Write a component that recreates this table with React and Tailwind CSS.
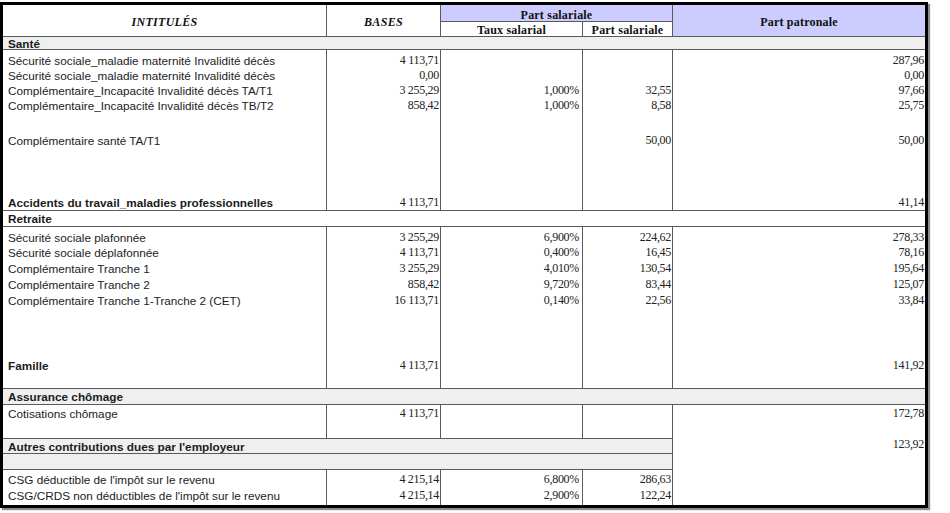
import React from "react";

const sans = "font-['Liberation_Sans',Arial,sans-serif]";
const serif = "font-['Liberation_Serif','Times_New_Roman',serif]";
const line = "border-[#5a5a5a]";

const santeRows = [
  { h: "h-[18px]", label: "Sécurité sociale_maladie maternité Invalidité décès", base: "4 113,71", pat: "287,96" },
  { h: "h-[15px]", label: "Sécurité sociale_maladie maternité Invalidité décès", base: "0,00", pat: "0,00" },
  { h: "h-[15px]", label: "Complémentaire_Incapacité Invalidité décès TA/T1", base: "3 255,29", taux: "1,000%", sal: "32,55", pat: "97,66" },
  { h: "h-[15px]", label: "Complémentaire_Incapacité Invalidité décès TB/T2", base: "858,42", taux: "1,000%", sal: "8,58", pat: "25,75" },
  { h: "h-[35px]", label: "Complémentaire santé TA/T1", sal: "50,00", pat: "50,00" },
  { h: "h-[63px]", label: "Accidents du travail_maladies professionnelles", bold: true, base: "4 113,71", pat: "41,14", last: true },
];

const retraiteRows = [
  { h: "h-[18px]", label: "Sécurité sociale plafonnée", base: "3 255,29", taux: "6,900%", sal: "224,62", pat: "278,33" },
  { h: "h-[15px]", label: "Sécurité sociale déplafonnée", base: "4 113,71", taux: "0,400%", sal: "16,45", pat: "78,16" },
  { h: "h-[16px]", label: "Complémentaire Tranche 1", base: "3 255,29", taux: "4,010%", sal: "130,54", pat: "195,64" },
  { h: "h-[16px]", label: "Complémentaire Tranche 2", base: "858,42", taux: "9,720%", sal: "83,44", pat: "125,07" },
  { h: "h-[16px]", label: "Complémentaire Tranche 1-Tranche 2 (CET)", base: "16 113,71", taux: "0,140%", sal: "22,56", pat: "33,84" },
  { h: "h-[65px]", label: "Famille", bold: true, base: "4 113,71", pat: "141,92" },
  { h: "h-[16px]", label: "", last: true },
];

const Num = ({ children, className = "" }) => (
  <span className={`${serif} text-[12px] leading-[15px] tracking-[-0.3px] text-[#222] ${className}`}>{children}</span>
);

const Head = ({ children, italic = false }) => (
  <span
    className={`${serif} text-[12px] leading-[12px] font-bold text-[#111] ${italic ? "italic tracking-[0.3px]" : "tracking-[0.2px]"}`}
  >
    {children}
  </span>
);

const Row = ({ row, patronale = true }) => (
  <div className={`flex ${row.h} ${row.last ? `border-b ${line}` : ""}`}>
    <div className={`w-[324px] border-r ${line} flex items-end pl-[5px]`}>
      <span
        className={`${sans} text-[11.75px] leading-[15px] text-[#1c1c1c] ${row.bold ? "font-bold" : ""}`}
      >
        {row.label}
      </span>
    </div>
    <div className={`w-[114px] border-r ${line} flex items-end justify-end pr-[1px]`}>
      <Num>{row.base}</Num>
    </div>
    <div className={`w-[142px] border-r ${line} flex items-end justify-end pr-[3px]`}>
      <Num>{row.taux}</Num>
    </div>
    <div className={`w-[90px] border-r ${line} flex items-end justify-end pr-[1px]`}>
      <Num>{row.sal}</Num>
    </div>
    {patronale && (
      <div className="w-[252px] flex items-end justify-end pr-[1px]">
        <Num>{row.pat}</Num>
      </div>
    )}
  </div>
);

const Band = ({ label, h = "h-[16px]", top = true, className = "" }) => (
  <div
    className={`${h} bg-[#efefef] border-b ${top ? "border-t" : ""} ${line} flex items-center pl-[5px] ${className}`}
  >
    <span className={`${sans} text-[11.75px] font-bold leading-[13px] text-[#1c1c1c]`}>{label}</span>
  </div>
);

export default function App() {
  return (
    <div className="w-[950px] h-[513px] bg-white pt-[2px]">
      <div className="w-[928px] border-[3px] border-black shadow-[2px_2px_1px_rgba(0,0,0,0.45)]">
        {/* en-tête */}
        <div className={`flex h-[32px] border-b ${line}`}>
          <div className={`w-[324px] border-r ${line} flex items-center justify-center pt-[2px]`}>
            <Head italic>INTITULÉS</Head>
          </div>
          <div className={`w-[114px] border-r ${line} flex items-center justify-center pt-[2px]`}>
            <Head italic>BASES</Head>
          </div>
          <div className={`w-[232px] border-r ${line} flex flex-col`}>
            <div
              className={`h-[17px] shrink-0 bg-[#ccccff] border-b ${line} flex items-start justify-center pt-[4px]`}
            >
              <Head>Part salariale</Head>
            </div>
            <div className="flex flex-1 min-h-0">
              <div className={`w-[142px] border-r ${line} flex items-center justify-center pt-[2px]`}>
                <Head>Taux salarial</Head>
              </div>
              <div className="flex-1 flex items-center justify-center pt-[2px]">
                <Head>Part salariale</Head>
              </div>
            </div>
          </div>
          <div className="w-[252px] bg-[#ccccff] flex items-center justify-center pt-[2px]">
            <Head>Part patronale</Head>
          </div>
        </div>

        {/* Santé */}
        <Band label="Santé" h="h-[13px]" top={false} />
        {santeRows.map((row, i) => (
          <Row key={i} row={row} />
        ))}

        {/* Retraite */}
        <Band label="Retraite" h="h-[16px]" top={false} className="bg-white" />
        {retraiteRows.map((row, i) => (
          <Row key={i} row={row} />
        ))}

        {/* Assurance chômage */}
        <Band label="Assurance chômage" h="h-[16px]" top={false} />
        <div className="flex h-[100px]">
          <div className="w-[670px] flex flex-col">
            <Row row={{ h: "h-[16px]", label: "Cotisations chômage", base: "4 113,71" }} patronale={false} />
            <Row row={{ h: "h-[17px]", label: "" }} patronale={false} />
            <Band label="Autres contributions dues par l'employeur" className={`border-r ${line}`} />
            <Band label="" top={false} className={`border-r ${line}`} />
            <Row
              row={{ h: "h-[17px]", label: "CSG déductible de l'impôt sur le revenu", base: "4 215,14", taux: "6,800%", sal: "286,63" }}
              patronale={false}
            />
            <Row
              row={{ h: "h-[16px]", label: "CSG/CRDS non déductibles de l'impôt sur le revenu", base: "4 215,14", taux: "2,900%", sal: "122,24" }}
              patronale={false}
            />
            <Row row={{ h: "h-[2px]", label: "" }} patronale={false} />
          </div>
          <div className="w-[252px] flex flex-col items-end pr-[1px]">
            <div className="h-[16px] flex items-end">
              <Num>172,78</Num>
            </div>
            <div className="h-[15px]" />
            <div className="h-[16px] flex items-end">
              <Num>123,92</Num>
            </div>
          </div>
        </div>
      </div>
    </div>
  );
}
